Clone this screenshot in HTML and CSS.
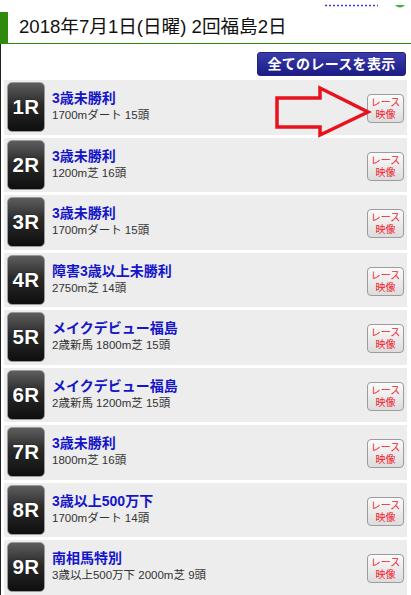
FILE: index.html
```html
<!DOCTYPE html>
<html lang="ja">
<head>
<meta charset="utf-8">
<link rel="stylesheet" href="styles.css">
</head>
<body>
<div class="topstrip">
  <svg class="topsvg" width="411" height="12" viewBox="0 0 411 12">
    <line x1="325" y1="5.5" x2="378" y2="5.5" stroke="#3a3ad0" stroke-width="1.5" stroke-dasharray="2 2"/>
    <path d="M395 5 Q400 10 405 5 Z" fill="#45b045"/>
  </svg>
</div>
<div class="page">
  <h1 class="title">2018年7月1日(日曜) 2回福島2日</h1>
  <div class="allbar"><a class="allbtn">全てのレースを表示</a></div>
  <ul class="races">
    <li class="race first">
      <div class="num">1R</div>
      <div class="info"><div class="name">3歳未勝利</div><div class="sub">1700mダート 15頭</div></div>
      <div class="video">レース<br>映像</div>
      <svg class="arrow" width="380" height="70" viewBox="0 0 380 70">
        <polygon points="273,18 316,18 316,8 364,32 316,55 316,47 273,47" fill="none" stroke="#e8121c" stroke-width="3.5"/>
      </svg>
    </li>
    <li class="race">
      <div class="num">2R</div>
      <div class="info"><div class="name">3歳未勝利</div><div class="sub">1200m芝 16頭</div></div>
      <div class="video">レース<br>映像</div>
    </li>
    <li class="race">
      <div class="num">3R</div>
      <div class="info"><div class="name">3歳未勝利</div><div class="sub">1700mダート 15頭</div></div>
      <div class="video">レース<br>映像</div>
    </li>
    <li class="race">
      <div class="num">4R</div>
      <div class="info"><div class="name">障害3歳以上未勝利</div><div class="sub">2750m芝 14頭</div></div>
      <div class="video">レース<br>映像</div>
    </li>
    <li class="race">
      <div class="num">5R</div>
      <div class="info"><div class="name">メイクデビュー福島</div><div class="sub">2歳新馬 1800m芝 15頭</div></div>
      <div class="video">レース<br>映像</div>
    </li>
    <li class="race">
      <div class="num">6R</div>
      <div class="info"><div class="name">メイクデビュー福島</div><div class="sub">2歳新馬 1200m芝 15頭</div></div>
      <div class="video">レース<br>映像</div>
    </li>
    <li class="race">
      <div class="num">7R</div>
      <div class="info"><div class="name">3歳未勝利</div><div class="sub">1800m芝 16頭</div></div>
      <div class="video">レース<br>映像</div>
    </li>
    <li class="race">
      <div class="num">8R</div>
      <div class="info"><div class="name">3歳以上500万下</div><div class="sub">1700mダート 14頭</div></div>
      <div class="video">レース<br>映像</div>
    </li>
    <li class="race">
      <div class="num">9R</div>
      <div class="info"><div class="name">南相馬特別</div><div class="sub">3歳以上500万下 2000m芝 9頭</div></div>
      <div class="video">レース<br>映像</div>
    </li>
  </ul>
</div>
</body>
</html>
```

FILE: styles.css
```css
* { box-sizing: border-box; }
html, body {
  margin: 0;
  padding: 0;
  background: #fff;
  font-family: "Liberation Sans", "Noto Sans CJK JP", sans-serif;
  overflow: hidden;
}
.topstrip { height: 12px; }
.topsvg { display: block; }
.page {
  border-left: 1px solid #222;
}
.title {
  margin: 0 0 0 -1px;
  height: 32px;
  border-left: 8px solid #2f8a0c;
  border-bottom: 1.5px solid #2f8a0c;
  font-size: 18.6px;
  font-weight: normal;
  color: #111;
  line-height: 30px;
  padding-left: 11px;
}
.allbar {
  display: flex;
  justify-content: flex-end;
  padding: 8px 5px 4px 0;
}
.allbtn {
  display: block;
  width: 149px;
  height: 24px;
  border: 1px solid #23237a;
  border-radius: 3px;
  background: linear-gradient(#3b3bab, #1c1c86);
  color: #fff;
  font-weight: bold;
  font-size: 14px;
  line-height: 22px;
  text-align: center;
  letter-spacing: 0.3px;
}
.races {
  list-style: none;
  margin: 0;
  padding: 0 4px 0 3px;
}
.race {
  position: relative;
  display: flex;
  align-items: center;
  height: 54.5px;
  margin-bottom: 3px;
  background: #ededed;
  padding: 0 3px 0 3px;
}
.num {
  width: 38px;
  height: 50px;
  border-radius: 5px;
  border: 1px solid #9a9a9a;
  background: linear-gradient(#5e5e5e, #2a2a2a 45%, #0e0e0e);
  color: #fff;
  font-weight: bold;
  font-size: 20.5px;
  line-height: 48px;
  text-align: center;
  text-shadow: 0 0 1px #000;
  letter-spacing: 0.5px;
  flex: none;
}
.info {
  flex: 1;
  padding-left: 7px;
  margin-top: -1px;
}
.name {
  color: #1515c8;
  font-weight: bold;
  font-size: 14px;
  line-height: 17px;
}
.sub {
  color: #333;
  font-size: 11.5px;
  line-height: 16px;
}
.video {
  width: 37px;
  height: 29px;
  border: 1px solid #9c9c9c;
  border-radius: 4px;
  background: linear-gradient(#fbfbfb, #dcdcdc);
  color: #f2222e;
  font-size: 10px;
  line-height: 12px;
  text-align: center;
  padding-top: 2px;
  margin-top: 3px;
  flex: none;
}
.arrow {
  position: absolute;
  left: 0;
  top: 0;
  overflow: visible;
}
```
